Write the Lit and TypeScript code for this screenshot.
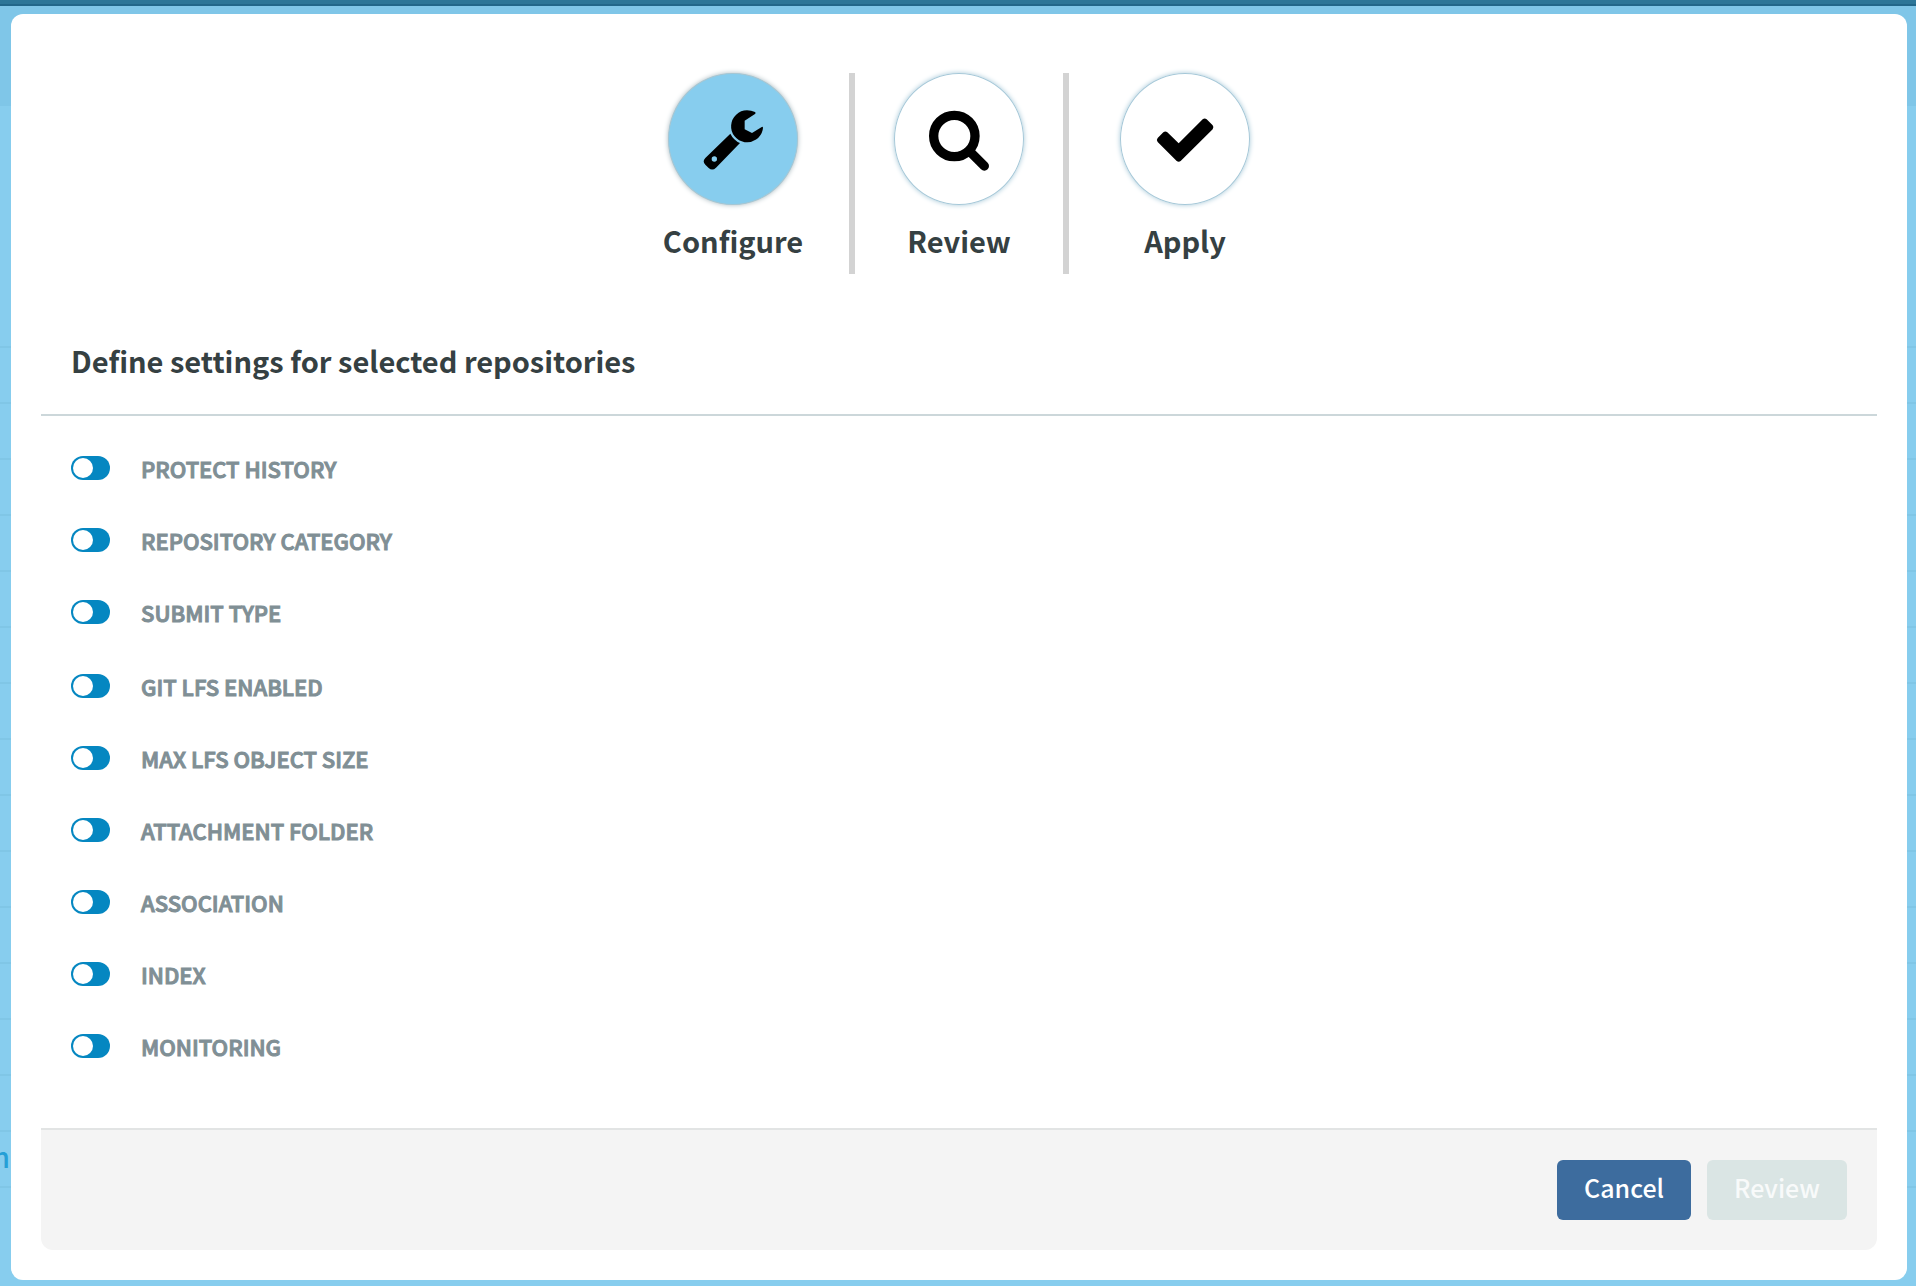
import { LitElement, html, css, svg, type TemplateResult } from "lit";
import { customElement } from "lit/decorators.js";
import { classMap } from "lit/directives/class-map.js";

interface Step {
  label: string;
  viewBox: string;
  icon: TemplateResult<2>;
  active?: boolean;
}

const steps: Step[] = [
  {
    label: "Configure",
    active: true,
    viewBox: "7 -1 240 240",
    icon: svg`
      <path d="M193 38 Q182 33 169 33 A48 48 0 1 0 216 92 Q219 79 212 84 L184 101 L162 90 L162 64 L193 44 Q197 41 193 38 Z" />
      <path fill-rule="evenodd" d="M119 103 Q129 123 148 131 L76 205 Q65 216 54 206 L44 196 Q34 186 44 176 Z M71 171 A8 8 0 1 0 71 187 A8 8 0 1 0 71 171 Z" />
    `,
  },
  {
    label: "Review",
    viewBox: "12 -2 240 240",
    icon: svg`
      <circle class="stroke" cx="118" cy="109" r="62" />
      <path class="stroke" d="M166 157 L208 199" />
    `,
  },
  {
    label: "Apply",
    viewBox: "91 86 240 240",
    icon: svg`
      <path d="M129 203 L146 186 Q152 181 158 186 L192 219 L264 147 Q270 142 276 147 L294 165 Q299 171 294 177 L198 272 Q192 277 186 272 L129 215 Q124 209 129 203 Z" />
    `,
  },
];

const settingGroups: string[][] = [
  ["PROTECT HISTORY", "REPOSITORY CATEGORY", "SUBMIT TYPE"],
  ["GIT LFS ENABLED", "MAX LFS OBJECT SIZE", "ATTACHMENT FOLDER", "ASSOCIATION", "INDEX", "MONITORING"],
];

const backdropRows = Array.from({ length: 15 }, (_, i) => (i === 14 ? "n" : ""));

@customElement("setting-switch")
export class SettingSwitch extends LitElement {
  static properties = { label: {} };
  declare label: string;

  static styles = css`
    :host {
      display: flex;
      align-items: center;
      height: 72px;
    }
    .switch {
      appearance: none;
      box-sizing: border-box;
      display: flex;
      flex: none;
      width: 39px;
      height: 24px;
      margin: 0 31px 0 0;
      padding: 2px;
      border-radius: 12px;
      background: #0587c1;
      cursor: pointer;
    }
    .switch::before {
      content: "";
      width: 20px;
      height: 20px;
      border-radius: 50%;
      background: #fff;
    }
    .switch:checked {
      justify-content: flex-end;
    }
    .name {
      color: #808f95;
      font-size: 22px;
      font-weight: 500;
      line-height: 32px;
      -webkit-text-stroke: 1px #808f95;
      cursor: pointer;
    }
  `;

  render() {
    return html`
      <input class="switch" id="toggle" type="checkbox" role="switch" />
      <label class="name" for="toggle">${this.label}</label>
    `;
  }
}

@customElement("app-root")
export class AppRoot extends LitElement {
  static styles = css`
    :host {
      display: block;
      color: #354042;
      font-family: "Noto Sans CJK SC", "Noto Sans", sans-serif;
    }
    .page {
      position: relative;
      box-sizing: border-box;
      display: flex;
      min-height: 100vh;
      padding: 14px 9px 6px 11px;
      background: #87cdee;
    }

    /* Dimmed application behind the dialog */
    .backdrop {
      position: absolute;
      inset: 0;
      overflow: hidden;
    }
    .topbar {
      height: 4px;
      border-bottom: 2px solid #22678a;
      background: #2d7698;
    }
    .subheader {
      height: 100px;
      background: #7fc6e8;
    }
    .toolbar {
      height: 240px;
      border-bottom: 2px solid #80c6e6;
    }
    .row {
      display: flex;
      justify-content: flex-end;
      box-sizing: border-box;
      height: 56px;
      padding-right: calc(100% - 10px);
      padding-bottom: 6px;
      border-bottom: 2px solid #80c6e6;
      color: #259fd6;
      font-size: 28px;
      font-weight: 500;
      line-height: 48px;
    }

    .dialog {
      position: relative;
      box-sizing: border-box;
      display: flex;
      flex: 1;
      flex-direction: column;
      padding: 59px 30px 30px;
      border-radius: 12px;
      background: #fff;
    }

    .steps {
      display: flex;
      justify-content: center;
      margin: 0;
      padding: 0;
      list-style: none;
    }
    .step {
      display: flex;
      flex-direction: column;
      align-items: center;
      gap: 15px;
      width: 232px;
      padding-bottom: 14px;
    }
    .step:nth-child(2) {
      width: 208px;
      border: solid #d3d3d3;
      border-width: 0 6px;
    }
    .badge {
      box-sizing: border-box;
      display: flex;
      align-items: center;
      justify-content: center;
      width: 130px;
      height: 132px;
      border: 1px solid #a6c8d8;
      border-radius: 50%;
      box-shadow: 0 0 5px #a6c8d8;
    }
    .badge.active {
      border-color: #a5c6d3;
      background: #87cdee;
      box-shadow: 0 0 5px #a9b9bf;
    }
    .icon {
      width: 80px;
      height: 80px;
    }
    .icon .stroke {
      fill: none;
      stroke: #000;
      stroke-width: 28px;
      stroke-linecap: round;
    }
    .step-label,
    .title {
      font-size: 29px;
      font-weight: 700;
      line-height: 40px;
    }
    .title {
      margin: 0;
      padding: 66px 30px 34px;
      border-bottom: 2px solid #ccd7da;
    }

    .settings {
      display: flex;
      flex-direction: column;
      gap: 2px;
      padding: 16px 30px 44px;
    }

    .footer {
      display: flex;
      justify-content: flex-end;
      gap: 16px;
      margin-top: auto;
      padding: 30px;
      border-top: 2px solid #e2e4e4;
      border-radius: 0 0 12px 12px;
      background: #f4f4f4;
    }
    .button {
      height: 60px;
      padding: 0 27px 6px;
      border: 0;
      border-radius: 6px;
      background: #3d6c9e;
      color: #fff;
      font-family: inherit;
      font-size: 25px;
      font-weight: 500;
      cursor: pointer;
    }
    .button:disabled {
      background: #dae5e4;
      color: #f8fafa;
      cursor: default;
    }
  `;

  private renderStep(step: Step) {
    return html`
      <li class="step">
        <span class=${classMap({ badge: true, active: !!step.active })}>
          <svg class="icon" viewBox=${step.viewBox} aria-hidden="true">${step.icon}</svg>
        </span>
        <span class="step-label">${step.label}</span>
      </li>
    `;
  }

  render() {
    return html`
      <div class="page">
        <div class="backdrop" aria-hidden="true">
          <div class="topbar"></div>
          <div class="subheader"></div>
          <div class="toolbar"></div>
          ${backdropRows.map((text) => html`<div class="row">${text}</div>`)}
        </div>
        <main class="dialog" role="dialog" aria-labelledby="title">
          <ol class="steps">
            ${steps.map((step) => this.renderStep(step))}
          </ol>
          <h2 class="title" id="title">Define settings for selected repositories</h2>
          <div class="settings">
            ${settingGroups.map(
              (group) => html`
                <div class="group">
                  ${group.map((name) => html`<setting-switch .label=${name}></setting-switch>`)}
                </div>
              `,
            )}
          </div>
          <footer class="footer">
            <button class="button" type="button">Cancel</button>
            <button class="button" type="button" disabled>Review</button>
          </footer>
        </main>
      </div>
    `;
  }
}
